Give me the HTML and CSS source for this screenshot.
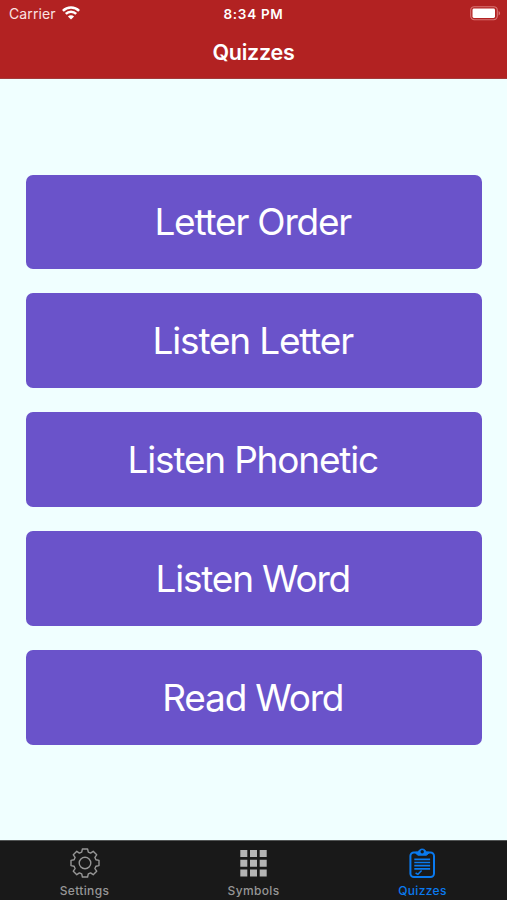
FILE: index.html
```html
<!DOCTYPE html>
<html lang="en">
<head>
  <meta charset="UTF-8"/>
  <meta name="viewport" content="width=device-width, initial-scale=1.0"/>
  <title>Quizzes</title>
  <link rel="stylesheet" href="styles.css">
</head>
<body>

  <!-- Header -->
  <div class="header">
    <div class="status-bar">
      <div class="carrier">
        <span>Carrier</span>
        <svg class="wifi" width="18" height="14" viewBox="0 0 18 14">
          <path d="M0.9 4.8C5.4 0.3 12.6 0.3 17.1 4.8M3.8 7.9C6.7 5 11.3 5 14.2 7.9" fill="none" stroke="#fff" stroke-width="2.5"/>
          <path d="M9 13.6L5.9 10.4C7.6 8.8 10.4 8.8 12.1 10.4Z" fill="#fff"/>
        </svg>
      </div>
      <div class="time">8:34 PM</div>
      <div class="battery">
        <svg width="31" height="15" viewBox="0 0 31 15">
          <rect x="0.7" y="0.7" width="26.6" height="13" rx="3.6" fill="none" stroke="#d97474" stroke-width="1.1"/>
          <rect x="2.5" y="2.5" width="22.5" height="9.4" rx="1.4" fill="#fff"/>
          <path d="M28.6 5C30.6 5.8 30.6 8.6 28.6 9.4Z" fill="#d97474"/>
        </svg>
      </div>
    </div>
    <div class="title">Quizzes</div>
  </div>

  <!-- Quiz List -->
  <div class="quiz-list">
    <div class="quiz-button">Letter Order</div>
    <div class="quiz-button">Listen Letter</div>
    <div class="quiz-button">Listen Phonetic</div>
    <div class="quiz-button">Listen Word</div>
    <div class="quiz-button">Read Word</div>
  </div>

  <!-- Bottom Navigation -->
  <div class="bottom-nav">
    <div class="nav-item">
      <svg width="32" height="32" viewBox="-16 -16 32 32" fill="none" stroke="currentColor" stroke-width="1.4" stroke-linejoin="round">
        <path d="M-2.6 -14H2.6L3.3 -10.9L5.6 -9.9L8.2 -11.7L11.7 -8.2L9.9 -5.6L10.9 -3.3L14 -2.6V2.6L10.9 3.3L9.9 5.6L11.7 8.2L8.2 11.7L5.6 9.9L3.3 10.9L2.6 14H-2.6L-3.3 10.9L-5.6 9.9L-8.2 11.7L-11.7 8.2L-9.9 5.6L-10.9 3.3L-14 2.6V-2.6L-10.9 -3.3L-9.9 -5.6L-11.7 -8.2L-8.2 -11.7L-5.6 -9.9L-3.3 -10.9Z"/>
        <circle r="5.8"/>
      </svg>
      <div class="nav-label">Settings</div>
    </div>
    <div class="nav-item">
      <svg width="32" height="32" viewBox="0.7 0 32 32" fill="#b4b4b4">
        <path d="M3 3h7v7h-7zM12.7 3h7v7h-7zM22.4 3h7v7h-7zM3 12.7h7v7h-7zM12.7 12.7h7v7h-7zM22.4 12.7h7v7h-7zM3 22.4h7v7h-7zM12.7 22.4h7v7h-7zM22.4 22.4h7v7h-7z"/>
      </svg>
      <div class="nav-label">Symbols</div>
    </div>
    <div class="nav-item active">
      <svg width="32" height="32" viewBox="0.9 0 32 32" fill="none" stroke="currentColor" stroke-width="2">
        <rect x="4.3" y="5.5" width="23.6" height="24.5" rx="3.5"/>
        <path d="M9.5 6.2V5.2H12.4C12.6 1 19.6 1 19.8 5.2H22.7V6.2L20.3 8.2H11.9Z" fill="currentColor" stroke-width="1"/>
        <circle cx="16.1" cy="4.8" r="1.7" fill="#191919" stroke="none"/>
        <path d="M8.2 12.3H24M8.2 15.5H24M8.2 18.7H24M8.2 21.9H24" stroke-width="1.7"/>
        <path d="M9.5 26L11.8 27.3L15.5 23.5" stroke-width="1.5"/>
      </svg>
      <div class="nav-label">Quizzes</div>
    </div>
  </div>

</body>
</html>
```
FILE: styles.css
```css
* { box-sizing: border-box; }
body {
  font-family: Inter, "Liberation Sans", sans-serif;
  background: #f0ffff;
  margin: 0;
  height: 900px;
  display: flex;
  flex-direction: column;
  overflow: hidden;
}

.header {
  height: 79px;
  background: #b22222;
  color: #fff;
  border-bottom: 1px solid #a33b3b;
}
.status-bar {
  display: grid;
  grid-template-columns: 1fr auto 1fr;
  align-items: center;
  height: 27px;
  padding: 0 6px 0 9px;
  font-size: 14px;
}
.carrier {
  display: flex;
  align-items: center;
  gap: 6px;
  color: #fbe3e3;
  letter-spacing: 0.1px;
}
.wifi { margin-top: -2px; }
.time {
  font-weight: 600;
  font-size: 13.5px;
  letter-spacing: 0.7px;
  margin-right: 3px;
}
.battery { display: flex; justify-content: flex-end; }
.title {
  text-align: center;
  font-size: 21.5px;
  font-weight: 600;
  line-height: 26px;
  letter-spacing: -0.25px;
  margin-top: 12px;
}

.quiz-list {
  flex: 1;
  display: flex;
  flex-direction: column;
  gap: 24.3px;
  padding: 95.5px 25.5px 0 26px;
}
.quiz-button {
  display: flex;
  align-items: center;
  justify-content: center;
  height: 94.6px;
  padding-right: 2px;
  border-radius: 7px;
  background: #6a53ca;
  color: #fff;
  font-size: 37px;
  letter-spacing: -1.2px;
}

.bottom-nav {
  display: flex;
  height: 60px;
  background: #191919;
  border-top: 1px solid #525555;
}
.nav-item {
  flex: 1;
  display: flex;
  flex-direction: column;
  align-items: center;
  padding-top: 6px;
  color: #969696;
}
.nav-label {
  font-size: 12px;
  font-weight: 500;
  line-height: 15px;
  margin-top: 4px;
  letter-spacing: 0.35px;
}
.nav-item.active { color: #0a7aef; }
```
